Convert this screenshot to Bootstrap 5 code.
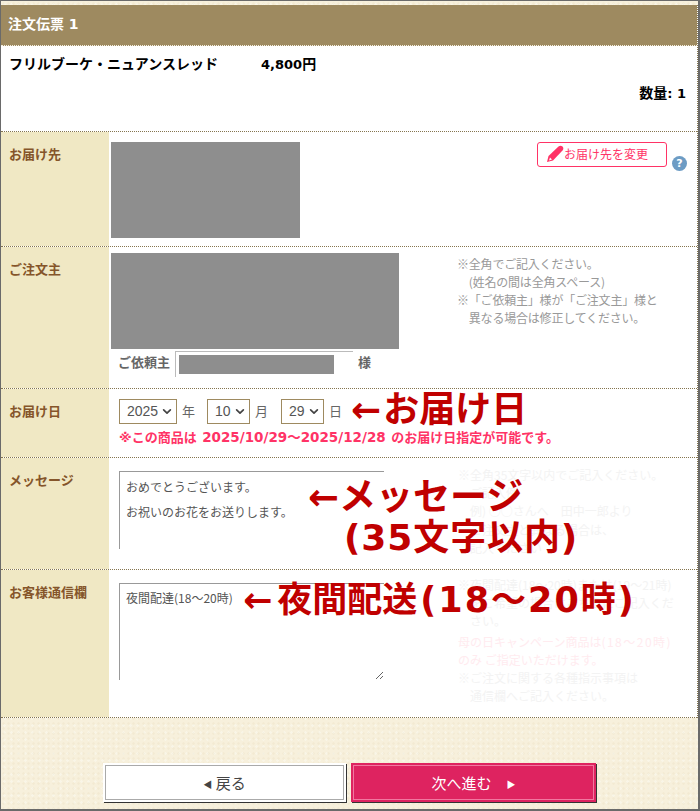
<!DOCTYPE html>
<html lang="ja">
<head>
<meta charset="utf-8">
<title>注文伝票</title>
<link href="https://cdn.jsdelivr.net/npm/bootstrap@5.3.0/dist/css/bootstrap.min.css" rel="stylesheet">
<style>
html,body{height:811px;overflow:hidden}
body{font-family:"DejaVu Sans","Noto Sans CJK JP",sans-serif;font-size:13px;color:#000;background:#f6efd9}
.frame{position:relative;height:811px;border:1px solid #6a6a6a;border-right-width:2px;border-bottom-width:2px;padding-top:4px;background-color:#f7f0dc;background-image:radial-gradient(rgba(190,165,110,.07) 1px,transparent 1.5px),radial-gradient(rgba(255,255,255,.3) 1px,transparent 1.5px);background-size:5px 5px,7px 7px}
.sheet{background:#fff;border-right:1px dotted #85754f}
.head-bar{height:41px;background:#9e8a60;color:#fff;font-weight:700;font-size:14px;line-height:38px;padding-left:7px;border-bottom:1px dotted #f4efe0}
.prod{height:86px;padding:8px 8px 0;font-weight:700;font-size:13px;border-bottom:1px dotted #85754f}
.prod-name{width:252px;font-size:14px}
.jp-big{font-size:14px}
.prod-qty{margin-top:8px;padding-right:3px}
.form-line{border-bottom:1px dotted #85754f}
.label-cell{width:108px;flex:none;background:#f0e8c4;color:#85552a;font-weight:700;font-size:13px;padding:13px 8px}
.body-cell{flex:1;position:relative;min-width:0}
.h-a{height:115px}.h-b{height:142px}.h-c{height:69px}.h-d{height:112px}.h-e{height:148px}
.mask{background:#8e8e8e}
.mask-a{width:189px;height:96px;margin:10px 0 0 2px}
.mask-b{width:288px;height:96px;margin:6px 0 0 2px}
.change-btn{position:absolute;top:10px;right:30px;width:130px;height:25px;border:1px solid #ff3366;border-radius:3px;color:#ff3366;font-size:12px;line-height:24px;padding-left:9px;background:#fff;text-decoration:none;white-space:nowrap}
.change-btn svg{vertical-align:-3px}
.help-dot{position:absolute;top:24px;right:10px;width:15px;height:15px;border-radius:50%;background:#6d9cc4;color:#fff;font-size:11px;font-weight:700;line-height:15px;text-align:center}
.note-gray{position:absolute;left:348px;top:8px;color:#999;font-size:12px;line-height:18px;letter-spacing:-.2px;white-space:nowrap;font-family:"Noto Sans CJK JP",sans-serif}
.sender{color:#666;font-weight:700;font-size:13px;padding:0 0 0 9px;height:28px}
.sender-box{width:178px;height:26px;border-top:1px solid #bbb;border-left:1px solid #bbb;margin:2px 0 0 5px;padding:3px 0 0 3px;align-self:flex-start}
.sender-mask{width:155px;height:19px}
.sama{margin-left:5px}
.sel-row{padding:10px 0 0 10px;color:#666;font-size:13px}
.date-sel.form-select{height:25px;min-height:0;padding:0 18px 0 7px;border:1px solid #9e8a60;border-radius:0;font-family:"Liberation Sans",sans-serif;font-size:14px;color:#555;background-image:url("data:image/svg+xml,%3csvg xmlns='http://www.w3.org/2000/svg' viewBox='0 0 16 16'%3e%3cpath fill='none' stroke='%23444' stroke-linecap='round' stroke-linejoin='round' stroke-width='3' d='m2 5 6 6 6-6'/%3e%3c/svg%3e");background-position:right 4px center;background-size:10px 9px;box-shadow:none}
.sel-y.form-select{width:58px;flex:none}
.sel-m.form-select{width:43px;flex:none}
.unit{margin:0 13px 0 5px}
.unit-y{margin-right:12px}
.avail{color:#ff3366;font-weight:700;font-size:13px;padding:5px 0 0 10px;white-space:nowrap;line-height:17px;word-spacing:1px}
.num-wide{font-size:13.500px}
.msg-box.form-control{display:block;position:absolute;left:10px;border-style:solid;border-color:#999;border-width:1px 0 0 1px;border-radius:0;box-shadow:none;width:265px;background:transparent;color:#555;font-family:"Noto Sans CJK JP",sans-serif}
.msg-a.form-control{top:13px;height:78px;padding:2px 6px;font-size:12px;line-height:25px;resize:none}
.msg-b.form-control{top:13px;height:97px;padding:6px;font-size:12px;line-height:16px;resize:both}
.note-faint{position:absolute;left:349px;white-space:nowrap;font-family:"Noto Sans CJK JP",sans-serif;font-size:12px;line-height:18.200px;color:#f3f3f3}
.note-pink{display:block;color:#ffebef;margin-top:2px}
.note-wide{letter-spacing:1.500px}
.red-tag{position:absolute;color:#c00000;font-family:"DejaVu Sans","Noto Sans CJK JP",sans-serif;font-weight:700;white-space:nowrap;line-height:1}
.tag-date{left:242px;top:3px;font-size:36px}
.tag-date .tag-jp{margin-left:2px}
.tag-msg{left:199px;top:21px;font-size:37px}
.tag-len{left:235px;top:62px;font-size:36px;letter-spacing:.9px}
.tag-night{left:134px;top:13px;font-size:35px}
.tag-night .tag-jp{margin-left:5px}
.tag-wide{letter-spacing:2px;margin-left:3px}
.foot{position:absolute;left:0;right:0;top:762px}
.nav-btn{display:block;height:39px;border-radius:0;font-size:15px;line-height:36px;padding:0;font-family:"Noto Sans CJK JP",sans-serif}
.btn.back-btn{width:243px;background:#fff;border:2px solid #fff;outline:1px solid #aaa;outline-offset:-3px;box-shadow:1px 1px 0 #333;color:#444}
.btn.next-btn{width:245px;margin-left:5px;background:#de2360;border:2px solid #de2360;outline:1px solid #f277a0;outline-offset:-3px;box-shadow:1px 1px 0 #333;color:#fff}
.tri{font-size:9px;vertical-align:1px}
</style>
</head>
<body>
<div class="frame">
  <div class="sheet">
    <div class="head-bar">注文伝票 1</div>
    <div class="prod">
      <div class="d-flex"><span class="prod-name">フリルブーケ・ニュアンスレッド</span><span>4,800<span class="jp-big">円</span></span></div>
      <div class="prod-qty text-end"><span class="jp-big">数量</span>: 1</div>
    </div>
    <div class="d-flex form-line h-a">
      <div class="label-cell">お届け先</div>
      <div class="body-cell">
        <div class="mask mask-a"></div>
        <a class="change-btn" href="#"><svg width="17" height="17" viewBox="0 0 17 17"><path fill="#ff3366" d="M0 17l1.500-6L11.500 1.500c1.300-1.200 3-1 4 0s1.200 2.700 0 4L6 15.500z"/><path fill="#fff" d="M3 12.500l2 2-3 1z"/></svg>お届け先を変更</a>
        <span class="help-dot">?</span>
      </div>
    </div>
    <div class="d-flex form-line h-b">
      <div class="label-cell">ご注文主</div>
      <div class="body-cell">
        <div class="mask mask-b"></div>
        <div class="d-flex sender align-items-center"><span>ご依頼主</span><div class="sender-box"><div class="mask sender-mask"></div></div><span class="sama">様</span></div>
        <div class="note-gray">※全角でご記入ください。<br>　(姓名の間は全角スペース)<br>※「ご依頼主」様が「ご注文主」様と<br>　異なる場合は修正してください。</div>
      </div>
    </div>
    <div class="d-flex form-line h-c">
      <div class="label-cell">お届け日</div>
      <div class="body-cell">
        <div class="d-flex align-items-center sel-row">
          <select class="form-select date-sel sel-y" aria-label="年"><option>2025</option></select><span class="unit unit-y">年</span>
          <select class="form-select date-sel sel-m" aria-label="月"><option>10</option></select><span class="unit">月</span>
          <select class="form-select date-sel sel-m" aria-label="日"><option>29</option></select><span class="unit">日</span>
        </div>
        <div class="avail">※この商品は <span class="num-wide">2025/10/29～2025/12/28</span> のお届け日指定が可能です。</div>
        <div class="red-tag tag-date">←<span class="tag-jp">お届け日</span></div>
      </div>
    </div>
    <div class="d-flex form-line h-d">
      <div class="label-cell">メッセージ</div>
      <div class="body-cell">
        <textarea class="form-control msg-box msg-a" aria-label="メッセージ">おめでとうございます。
お祝いのお花をお送りします。</textarea>
        <div class="note-faint" style="top:8px">※全角35文字以内でご記入ください。<br>　ご記入例<br>　例) ○○さんへ　田中一郎より<br>　ご注文主と異なる場合は、<br>　記入ください</div>
        <div class="red-tag tag-msg">←メッセージ</div>
        <div class="red-tag tag-len">(35文字以内)</div>
      </div>
    </div>
    <div class="d-flex form-line h-e">
      <div class="label-cell">お客様通信欄</div>
      <div class="body-cell">
        <textarea class="form-control msg-box msg-b" aria-label="お客様通信欄">夜間配達(18～20時)</textarea>
        <div class="note-faint" style="top:6px">※夜間配達(18～20時)または(19～21時)<br>　をご希望の場合はこちらにご記入くだ<br>　さい。<span class="note-pink">母の日キャンペーン商品は<span class="note-wide">(18～20時)</span><br>のみ ご指定いただけます。</span>※ご注文に関する各種指示事項は<br>　通信欄へご記入ください。</div>
        <div class="red-tag tag-night">←<span class="tag-jp">夜間配送</span><span class="tag-wide">(18～20時)</span></div>
      </div>
    </div>
  </div>
  <div class="foot d-flex justify-content-center">
    <a class="btn nav-btn back-btn" href="#"><span class="tri">◀</span> 戻る</a>
    <a class="btn nav-btn next-btn" href="#">次へ進む　<span class="tri">▶</span></a>
  </div>
</div>
<script src="https://cdn.jsdelivr.net/npm/bootstrap@5.3.0/dist/js/bootstrap.bundle.min.js"></script>
</body>
</html>
